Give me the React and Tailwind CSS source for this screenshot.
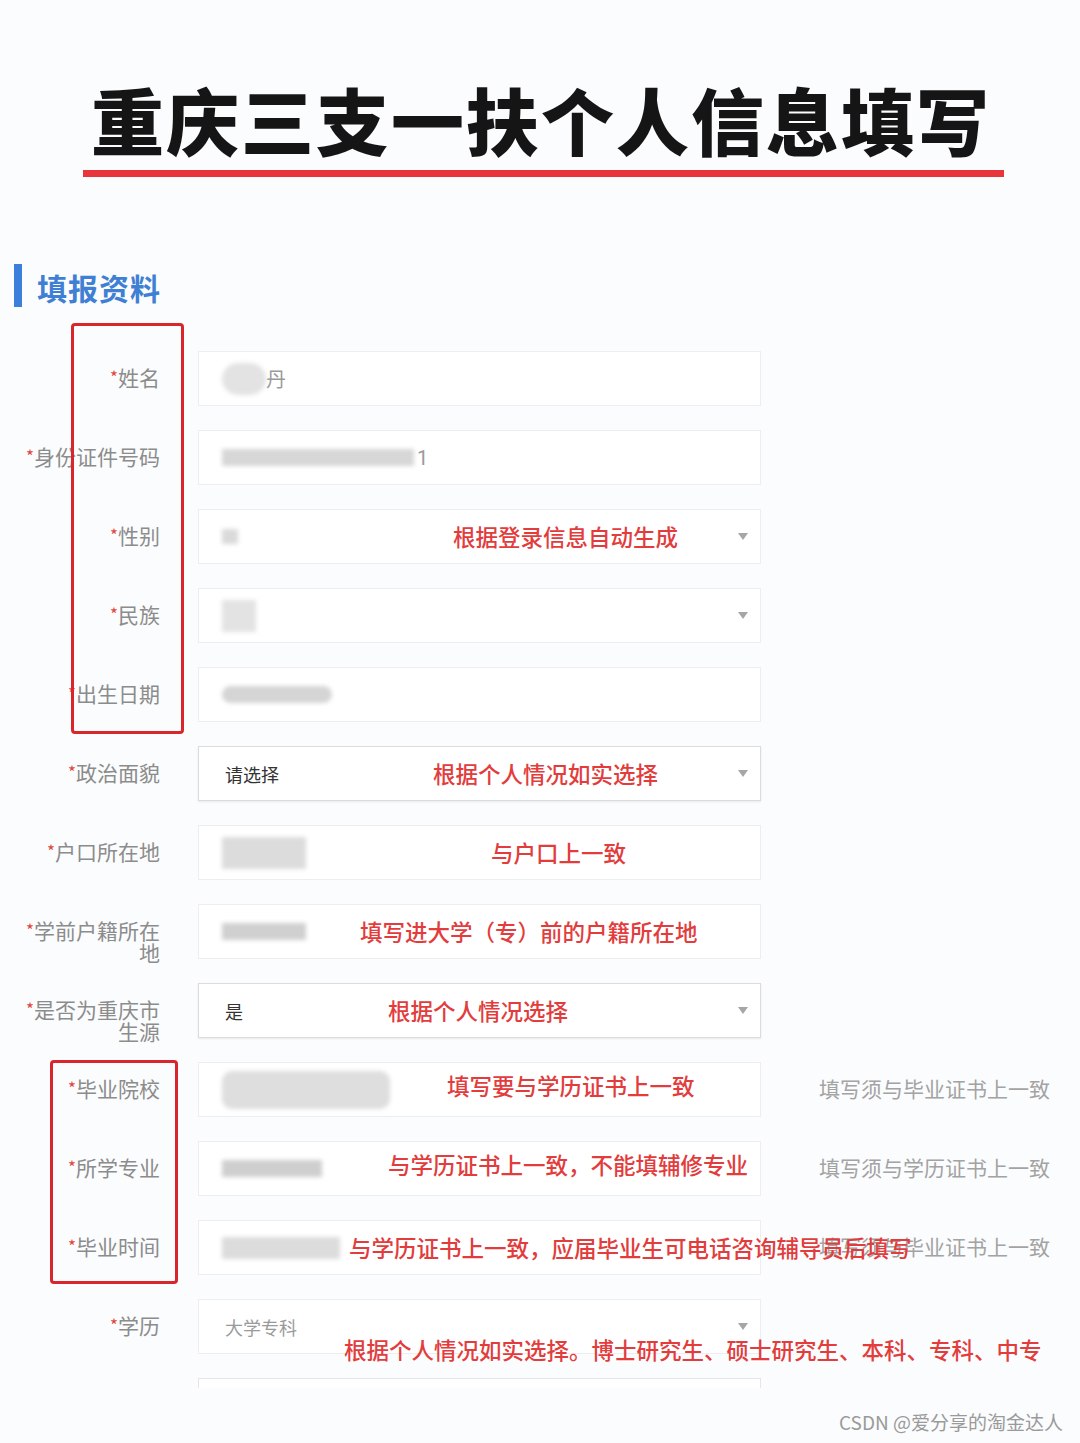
import React from "react";

const font = { fontFamily: '"Noto Sans CJK SC", "Noto Sans", sans-serif' };

const Arrow = () => (
  <svg className="ml-auto shrink-0" width="10" height="8" viewBox="0 0 10 8">
    <path d="M0 0 L10 0 L5 7 Z" fill="#a6a6a6" />
  </svg>
);

const Blur = ({ className }) => <div className={"shrink-0 blur-[2px] " + className} />;

const Hint = ({ className = "", pos = "relative", children }) => (
  <span className={pos + " z-10 shrink-0 whitespace-nowrap text-[22.5px] font-medium leading-none text-[#e23c3c] " + className}>
    {children}
  </span>
);

const Value = ({ className = "text-[#333]", children }) => (
  <span className={"ml-[3px] shrink-0 text-[18px] leading-none " + className}>{children}</span>
);

const Row = ({ label, star = true, children, right, strong, last }) => (
  <div className={"flex h-[55px] items-start " + (last ? "" : "mb-[24px]")}>
    <div className="w-[160px] shrink-0 pl-[20px] pt-[15px] text-right text-[21px] leading-[22px] text-[#8c8c8c]">
      {star && <span className="align-top text-[17px] text-[#e0473f]">*</span>}
      {label}
    </div>
    <div
      className={
        "relative ml-[38px] flex h-[55px] w-[563px] shrink-0 items-center border bg-white pl-[23px] pr-[12px] " +
        (strong ? "border-[#dcdcdc] shadow-[0_1px_2px_rgba(0,0,0,0.08)]" : "border-[#eceef1]")
      }
    >
      {children}
    </div>
    {right && <div className="ml-[58px] pt-[15px] text-[21px] leading-[22px] text-[#a3a3a3]">{right}</div>}
  </div>
);

export default function App() {
  return (
    <div className="relative min-h-screen w-[1080px] overflow-hidden bg-[#fbfcfd]" style={font}>
      {/* title */}
      <div className="pt-[82px] text-center">
        <div className="mr-[-2px] text-[73px] font-black leading-none tracking-[2px] text-[#151515]">
          重庆三支一扶个人信息填写
        </div>
      </div>
      <div className="ml-[83px] mt-[15px] h-[7px] w-[921px] bg-[#e8343b]" />

      {/* section header */}
      <div className="ml-[14px] mt-[87px] flex h-[43px] items-center">
        <div className="h-[43px] w-[8px] bg-[#3b7fdb]" />
        <div className="ml-[15px] mt-[4px] text-[30px] font-bold tracking-[1px] text-[#3f7fd4]">填报资料</div>
      </div>

      <div className="mt-[44px]">
        {/* group 1 */}
        <div className="relative">
          <div className="pointer-events-none absolute left-[71px] top-[-28px] z-20 h-[411px] w-[113px] rounded-[4px] border-[3px] border-[#d9262c]" />
          <Row label="姓名">
            <Blur className="h-[32px] w-[44px] rounded-full bg-[#e3e3e3]" />
            <span className="text-[20px] leading-none text-[#9a9a9a]">丹</span>
          </Row>
          <Row label="身份证件号码">
            <Blur className="h-[17px] w-[192px] bg-[#d7d7d7]" />
            <span className="ml-[3px] text-[20px] leading-none text-[#9a9a9a]" style={{ fontFamily: "Roboto, sans-serif" }}>1</span>
          </Row>
          <Row label="性别">
            <Blur className="h-[15px] w-[16px] bg-[#dadada]" />
            <Hint className="ml-[215px]">根据登录信息自动生成</Hint>
            <Arrow />
          </Row>
          <Row label="民族">
            <Blur className="h-[32px] w-[34px] bg-[#e3e3e3]" />
            <Arrow />
          </Row>
          <Row label="出生日期">
            <Blur className="h-[17px] w-[110px] rounded-full bg-[#d5d5d5]" />
          </Row>
        </div>

        <Row label="政治面貌" strong>
          <Value>请选择</Value>
          <Hint className="ml-[154px]">根据个人情况如实选择</Hint>
          <Arrow />
        </Row>
        <Row label="户口所在地">
          <Blur className="h-[32px] w-[84px] bg-[#dcdcdc]" />
          <Hint className="ml-[185px]">与户口上一致</Hint>
        </Row>
        <Row label="学前户籍所在地">
          <Blur className="h-[17px] w-[84px] bg-[#d0d0d0]" />
          <Hint className="ml-[54px]">填写进大学（专）前的户籍所在地</Hint>
        </Row>
        <Row label="是否为重庆市生源" strong>
          <Value>是</Value>
          <Hint className="ml-[145px]">根据个人情况选择</Hint>
          <Arrow />
        </Row>

        {/* group 2 */}
        <div className="relative">
          <div className="pointer-events-none absolute left-[50px] top-[-2px] z-20 h-[224px] w-[128px] rounded-[4px] border-[3px] border-[#d9262c]" />
          <Row label="毕业院校" right="填写须与毕业证书上一致">
            <Blur className="h-[38px] w-[168px] rounded-[10px] bg-[#dedede]" />
            <Hint className="mb-[8px] ml-[57px]">填写要与学历证书上一致</Hint>
          </Row>
          <Row label="所学专业" right="填写须与学历证书上一致">
            <Blur className="h-[17px] w-[100px] bg-[#cfcfcf]" />
            <Hint className="mb-[8px] ml-[66px]">与学历证书上一致，不能填辅修专业</Hint>
          </Row>
          <Row label="毕业时间" right="填写须与毕业证书上一致">
            <Blur className="h-[22px] w-[118px] bg-[#dcdcdc]" />
            <Hint className="ml-[9px]">与学历证书上一致，应届毕业生可电话咨询辅导员后填写</Hint>
          </Row>
        </div>

        <Row label="学历">
          <Value className="text-[#9a9a9a]">大学专科</Value>
          <Arrow />
          {/* annotation that spills over the field's lower edge */}
          <Hint pos="absolute" className="left-[145px] top-[38px]">
            根据个人情况如实选择。博士研究生、硕士研究生、本科、专科、中专
          </Hint>
        </Row>
        <div className="ml-[198px] h-[10px] w-[563px] border-x border-t border-[#e3e5e8] bg-white" />
      </div>

      <div className="mt-[24px] flex justify-end pr-[17px] text-[19px] leading-none text-[#9a9a9a]">
        CSDN @爱分享的淘金达人
      </div>
    </div>
  );
}
